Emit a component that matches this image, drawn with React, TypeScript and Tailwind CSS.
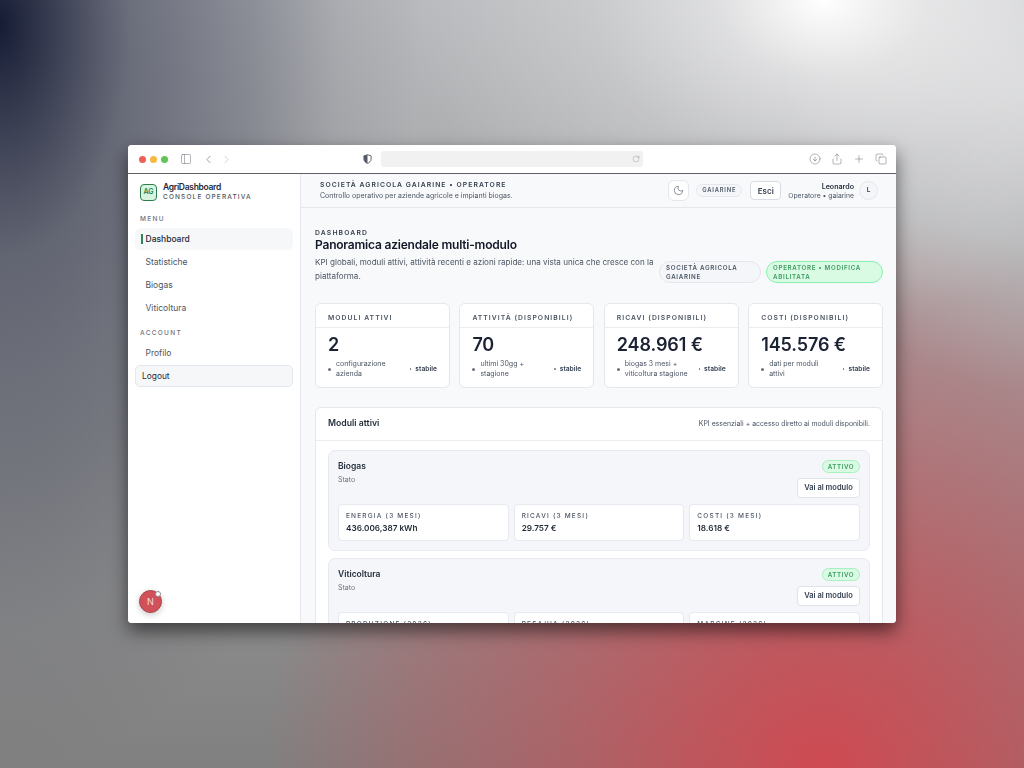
import { ChevronLeft, ChevronRight, CircleArrowDown, Copy, Moon, PanelLeft, Plus, RotateCw, Share } from 'lucide-react';

const kpis = [
  { label: 'MODULI ATTIVI', value: '2', note: 'configurazione azienda', noteWidth: 'w-[60px]' },
  { label: 'ATTIVITÀ (DISPONIBILI)', value: '70', note: 'ultimi 30gg + stagione', noteWidth: 'w-[60px]' },
  { label: 'RICAVI (DISPONIBILI)', value: '248.961 €', note: 'biogas 3 mesi + viticoltura stagione', noteWidth: 'w-[70px]' },
  { label: 'COSTI (DISPONIBILI)', value: '145.576 €', note: 'dati per moduli attivi', noteWidth: 'w-[60px]' },
];

const modules = [
  {
    name: 'Biogas',
    metrics: [
      { label: 'ENERGIA (3 MESI)', value: '436.006,387 kWh' },
      { label: 'RICAVI (3 MESI)', value: '29.757 €' },
      { label: 'COSTI (3 MESI)', value: '18.618 €' },
    ],
  },
  {
    name: 'Viticoltura',
    metrics: [
      { label: 'PRODUZIONE (2026)', value: '' },
      { label: 'RESA/HA (2026)', value: '' },
      { label: 'MARGINE (2026)', value: '' },
    ],
  },
];

const NavItem = ({ label, active }: { label: string; active?: boolean }) => (
  <div className={`flex h-[22px] items-center rounded-[6px] pl-[6px] text-[8.5px] ${active ? 'bg-[#f6f7f9] font-medium text-[#1f2937]' : 'text-[#4b5563]'}`}>
    <span className={`mr-[3px] h-[10px] w-[1.5px] ${active ? 'bg-[#2f855a]' : 'bg-transparent'}`} />
    <span>{label}</span>
  </div>
);

const ShieldIcon = () => (
  <svg width="9" height="10" viewBox="0 0 10 11" className="text-[#555b66]">
    <path d="M5 .7 9 2v3.4c0 2.5-1.7 4-4 5-2.3-1-4-2.5-4-5V2z" fill="none" stroke="currentColor" strokeWidth="1" />
    <path d="M5 .7v9.7c-2.3-1-4-2.5-4-5V2z" fill="currentColor" />
  </svg>
);

const App = () => {
  return (
    <div
      className="flex h-[768px] w-[1024px] items-center justify-center overflow-hidden bg-[radial-gradient(ellipse_420px_320px_at_823px_0px,#ffffff_0,rgba(255,255,255,0.55)_25%,rgba(255,255,255,0.25)_55%,rgba(255,255,255,0)_100%),radial-gradient(ellipse_240px_300px_at_1024px_90px,rgba(255,255,255,0.4)_0,rgba(255,255,255,0)_100%),radial-gradient(circle_560px_at_823px_768px,#cf4a52_0,rgba(207,74,82,0.52)_47%,rgba(207,74,82,0.27)_75%,rgba(207,74,82,0)_100%),radial-gradient(ellipse_420px_750px_at_0px_25px,#161c35_0,rgba(22,28,53,0.47)_31%,rgba(22,28,53,0.27)_60%,rgba(22,28,53,0.08)_81%,rgba(22,28,53,0)_100%),linear-gradient(180deg,#b8b9bc_0%,#808080_100%)]"
      style={{ fontFamily: 'Inter, "Noto Sans", sans-serif' }}
    >
      <div className="flex h-[478px] w-[768px] flex-col overflow-hidden rounded-[4px] bg-white shadow-[0_8px_18px_rgba(0,0,0,0.55)] blur-[0.3px]">
        {/* browser bar */}
        <div className="flex h-[29px] shrink-0 items-center border-b-[1.5px] border-[#5f6166] bg-white pl-[11px] pr-[9px]">
          <div className="flex gap-[4px]">
            <span className="h-[7px] w-[7px] rounded-full bg-[#ee5f57]" />
            <span className="h-[7px] w-[7px] rounded-full bg-[#f5b93f]" />
            <span className="h-[7px] w-[7px] rounded-full bg-[#5fc555]" />
          </div>
          <PanelLeft size={12} strokeWidth={1} className="ml-[12px] text-[#666b73]" />
          <ChevronLeft size={13} strokeWidth={1.2} className="ml-[10px] text-[#666b73]" />
          <ChevronRight size={13} strokeWidth={1.2} className="ml-[5px] text-[#b8bbc0]" />
          <div className="ml-[130px]">
            <ShieldIcon />
          </div>
          <div className="ml-[9px] flex h-[16px] w-[262px] items-center justify-end rounded-[3px] bg-[#f1f1f2] pr-[3px]">
            <RotateCw size={8} strokeWidth={1} className="text-[#7a7d83]" />
          </div>
          <div className="ml-auto flex items-center gap-[10px] text-[#666b73]">
            <CircleArrowDown size={12} strokeWidth={1} />
            <Share size={12} strokeWidth={1} />
            <Plus size={12} strokeWidth={1} />
            <Copy size={12} strokeWidth={1} />
          </div>
        </div>

        <div className="flex min-h-0 flex-1">
          {/* sidebar */}
          <aside className="relative flex w-[173px] shrink-0 flex-col border-r border-[#e4e7ec] bg-white px-[7px]">
            <div className="ml-[5px] mt-[9px] flex items-center gap-[6px]">
              <div className="flex h-[17px] w-[17px] items-center justify-center rounded-[4px] border border-[#2f7d4f] bg-[#d6f5e0] text-[7px] font-semibold text-[#2f7d4f]">AG</div>
              <div className="-mt-[1px]">
                <div className="text-[8.5px] leading-[11px] font-semibold tracking-[-0.3px] text-[#1f2937]">AgriDashboard</div>
                <div className="text-[6.5px] leading-[9px] font-medium tracking-[1.15px] text-[#4b5563]">CONSOLE OPERATIVA</div>
              </div>
            </div>
            <div className="ml-[5px] mt-[13px] text-[6.5px] leading-[9px] font-medium tracking-[1.3px] text-[#6b7280]">MENU</div>
            <div className="mt-[4px] flex flex-col gap-[1px]">
              <NavItem label="Dashboard" active />
              <NavItem label="Statistiche" />
              <NavItem label="Biogas" />
              <NavItem label="Viticoltura" />
            </div>
            <div className="ml-[5px] mt-[10px] text-[6.5px] leading-[9px] font-medium tracking-[1.3px] text-[#6b7280]">ACCOUNT</div>
            <div className="mt-[4px]">
              <NavItem label="Profilo" />
            </div>
            <div className="mt-[1px] flex h-[22px] items-center rounded-[5px] border border-[#e4e7ec] bg-[#f6f7f9] pl-[6px] text-[8.4px] text-[#1f2937]">Logout</div>
            <div className="absolute bottom-[10px] left-[11px] flex h-[23px] w-[23px] items-center justify-center rounded-full border border-[#a8474c] bg-[#d2505a] text-[9px] font-light text-white shadow-[0_2px_6px_rgba(0,0,0,0.2)]">
              N
              <span className="absolute right-0 top-0 h-[6px] w-[6px] rounded-full border border-[#8b8f96] bg-white" />
            </div>
          </aside>

          {/* main */}
          <main className="flex min-w-0 flex-1 flex-col overflow-hidden bg-[#f8f9fa]">
            <header className="flex h-[34px] shrink-0 items-center justify-between border-b border-[#e4e7ec] pl-[19px] pr-[18px]">
              <div>
                <div className="text-[6.8px] leading-[10px] font-semibold tracking-[1.05px] text-[#374151]">SOCIETÀ AGRICOLA GAIARINE • OPERATORE</div>
                <div className="text-[7px] leading-[11px] text-[#4b5563]">Controllo operativo per aziende agricole e impianti biogas.</div>
              </div>
              <div className="flex items-center">
                <div className="flex h-[21px] w-[21px] items-center justify-center rounded-[6px] border border-[#e4e7ec] bg-white">
                  <Moon size={11} strokeWidth={1.2} className="text-[#374151]" />
                </div>
                <div className="ml-[7px] flex h-[13px] w-[46px] items-center justify-center rounded-full border border-[#e4e7ec] bg-[#f4f6fa] text-[5.8px] font-semibold tracking-[0.8px] text-[#4b5563]">GAIARINE</div>
                <div className="ml-[8px] flex h-[19px] w-[31px] items-center justify-center rounded-[4px] border border-[#d9dde3] bg-white text-[8px] font-semibold text-[#374151]">Esci</div>
                <div className="ml-[7px] text-right">
                  <div className="text-[7.1px] leading-[9px] font-semibold text-[#1f2937]">Leonardo</div>
                  <div className="text-[6.8px] leading-[9px] text-[#4b5563]">Operatore • gaiarine</div>
                </div>
                <div className="ml-[5px] flex h-[19px] w-[19px] items-center justify-center rounded-full border border-[#e4e7ec] bg-[#f4f6fa] text-[6.5px] font-semibold text-[#374151]">L</div>
              </div>
            </header>

            <div className="pl-[14px] pr-[13px] pt-[20px]">
              <div className="text-[6.8px] leading-[9px] font-semibold tracking-[1.15px] text-[#374151]">DASHBOARD</div>
              <h1 className="text-[12px] leading-[16px] font-semibold tracking-[-0.2px] text-[#111827]">Panoramica aziendale multi-modulo</h1>
              <div className="flex items-end justify-between">
                <p className="mt-[3px] w-[342px] text-[8.07px] leading-[13.5px] text-[#4b5563]">KPI globali, moduli attivi, attività recenti e azioni rapide: una vista unica che cresce con la piattaforma.</p>
                <div className="flex gap-[5px]">
                  <div className="flex h-[22px] w-[102px] items-center rounded-[11px] border border-[#e4e7ec] bg-[#f4f6fa] px-[6px] text-[6.2px] leading-[9px] font-semibold tracking-[0.7px] text-[#4b5563]">SOCIETÀ AGRICOLA GAIARINE</div>
                  <div className="flex h-[22px] w-[117px] items-center rounded-[11px] border border-[#86efac] bg-[#d9fbe4] px-[6px] text-[6.2px] leading-[9px] font-semibold tracking-[0.7px] text-[#3c9a5f]">OPERATORE • MODIFICA ABILITATA</div>
                </div>
              </div>

              <div className="mt-[20px] grid grid-cols-4 gap-[9.5px]">
                {kpis.map((kpi) => (
                  <div key={kpi.label} className="h-[85px] rounded-[6px] border border-[#e4e7ec] bg-white">
                    <div className="flex h-[24px] items-center border-b border-[#e9ecf1] px-[12px] pt-[6px] text-[6.8px] font-semibold tracking-[1.05px] text-[#4b5563]">{kpi.label}</div>
                    <div className="px-[12px] pt-[4px] text-[18px] leading-[26px] font-semibold tracking-[-0.1px] text-[#1a2233]">{kpi.value}</div>
                    <div className="flex items-center justify-between px-[12px] pt-[1px] text-[7px] leading-[10px] text-[#4b5563]">
                      <div className="flex items-center gap-[5px]">
                        <span className="h-[3px] w-[3px] shrink-0 rounded-full bg-[#6b7280]" />
                        <span className={kpi.noteWidth}>{kpi.note}</span>
                      </div>
                      <div className="flex items-center gap-[4px] text-[6.7px] font-semibold text-[#374151]">
                        <span className="h-[1.5px] w-[1.5px] rounded-full bg-[#6b7280]" />
                        stabile
                      </div>
                    </div>
                  </div>
                ))}
              </div>

              <section className="mt-[19px] rounded-[6px] border border-[#e4e7ec] bg-white">
                <div className="flex h-[33px] items-center justify-between border-b border-[#e9ecf1] px-[12px]">
                  <div className="text-[8.7px] font-semibold text-[#1f2937]">Moduli attivi</div>
                  <div className="text-[6.9px] text-[#4b5563]">KPI essenziali + accesso diretto ai moduli disponibili.</div>
                </div>
                <div className="flex flex-col gap-[7px] px-[12px] pt-[9px] pb-[12px]">
                  {modules.map((mod) => (
                    <div key={mod.name} className="h-[101px] rounded-[7px] border border-[#e6e9ef] bg-[#f4f6fa] px-[9px] pt-[9px]">
                      <div className="flex justify-between">
                        <div>
                          <div className="text-[8.5px] leading-[13px] font-semibold text-[#1f2937]">{mod.name}</div>
                          <div className="mt-[1px] text-[7px] leading-[12px] text-[#6b7280]">Stato</div>
                        </div>
                        <div className="flex flex-col items-end">
                          <div className="flex h-[13px] w-[38px] items-center justify-center rounded-full border border-[#a7f0bf] bg-[#d9fbe4] text-[6.2px] font-semibold tracking-[0.6px] text-[#3c9a5f]">ATTIVO</div>
                          <div className="mt-[5px] flex h-[20px] w-[63px] items-center justify-center rounded-[4px] border border-[#dfe3e9] bg-white text-[7.5px] font-semibold text-[#374151]">Vai al modulo</div>
                        </div>
                      </div>
                      <div className="mt-[6px] grid grid-cols-3 gap-[5px]">
                        {mod.metrics.map((m) => (
                          <div key={m.label} className="h-[37px] rounded-[4px] border border-[#e6e9ef] bg-white px-[7px] pt-[7px]">
                            <div className="text-[6.5px] leading-[9px] font-medium tracking-[1.2px] text-[#4b5563]">{m.label}</div>
                            <div className="mt-[1px] text-[8.2px] leading-[12px] font-semibold text-[#1f2937]">{m.value}</div>
                          </div>
                        ))}
                      </div>
                    </div>
                  ))}
                </div>
              </section>
            </div>
          </main>
        </div>
      </div>
    </div>
  );
};

export default App;
